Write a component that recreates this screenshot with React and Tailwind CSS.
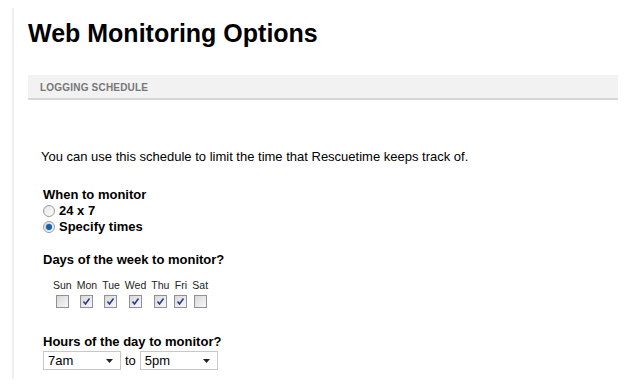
import { useState } from 'react';

const days = [
  { name: 'Sun', on: false },
  { name: 'Mon', on: true },
  { name: 'Tue', on: true },
  { name: 'Wed', on: true },
  { name: 'Thu', on: true },
  { name: 'Fri', on: true },
  { name: 'Sat', on: false },
];

function Radio({ checked }) {
  return (
    <span className="inline-flex h-[12px] w-[12px] items-center justify-center rounded-full border border-[#9a9a9a] bg-gradient-to-br from-[#e4e4e4] to-white">
      {checked && <span className="h-[6px] w-[6px] rounded-full bg-[#1c5fa8] shadow-[0_0_2px_#5aa0e8]" />}
    </span>
  );
}

function Check({ checked }) {
  return (
    <span className="inline-flex h-[13px] w-[13px] items-center justify-center border border-[#8f8f9d] bg-gradient-to-br from-[#d8d8d8] to-[#f8f8f8]">
      {checked && (
        <svg width="9" height="9" viewBox="0 0 9 9">
          <path d="M1.5 4.5 L3.5 7 L7.5 1.5" fill="none" stroke="#2a3a8c" strokeWidth="1.6" />
        </svg>
      )}
    </span>
  );
}

function Select({ value }) {
  return (
    <div className="flex h-[19px] w-[78px] items-center justify-between border border-[#c8c8c8] bg-white pl-[4px] pr-[7px]">
      <span>{value}</span>
      <svg width="7" height="4" viewBox="0 0 7 4">
        <path d="M0 0 H7 L3.5 4 Z" fill="#222" />
      </svg>
    </div>
  );
}

export default function App() {
  const [mode] = useState('specify');
  return (
    <div className="h-[390px] w-[625px] bg-white pt-[8px] pl-[12px] font-['Liberation_Sans',Arial,sans-serif] text-black">
      <div className="h-[371px] border-l-2 border-[#eeeeee] pl-[14px] pr-[7px]">
        <h1 className="pt-[10px] text-[25px] font-bold leading-[30px]">Web Monitoring Options</h1>

        <div className="mt-[27px] flex h-[25px] items-center border-b-2 border-[#d6d6d6] bg-[#f2f2f2] px-[12px] pt-[2px] text-[10px] font-bold tracking-[0.2px] text-[#777]">
          LOGGING SCHEDULE
        </div>

        <div className="pl-[13px] pt-[49px]">
          <p className="text-[13px] leading-[16px]">
            You can use this schedule to limit the time that Rescuetime keeps track of.
          </p>

          <div className="ml-[2px] mt-[22px] text-[13px] font-bold leading-[16px]">
            <div>When to monitor</div>
            <label className="flex items-center gap-[4px]">
              <Radio checked={mode === '24x7'} />
              <span>24 x 7</span>
            </label>
            <label className="flex items-center gap-[4px]">
              <Radio checked={mode === 'specify'} />
              <span>Specify times</span>
            </label>
          </div>

          <div className="ml-[2px] mt-[17px] text-[13px] font-bold leading-[16px]">Days of the week to monitor?</div>
          <div className="mt-[11px] flex gap-[5px] pl-[12px] text-[10.5px] leading-[12px] text-[#222]">
            {days.map((d) => (
              <div key={d.name} className="flex flex-col items-center gap-[4px]">
                <span>{d.name}</span>
                <Check checked={d.on} />
              </div>
            ))}
          </div>

          <div className="ml-[2px] mt-[26px] text-[13px] font-bold leading-[16px]">Hours of the day to monitor?</div>
          <div className="ml-[2px] mt-[1px] flex items-center gap-[4px] text-[13px]">
            <Select value="7am" />
            <span>to</span>
            <Select value="5pm" />
          </div>
        </div>
      </div>
    </div>
  );
}
